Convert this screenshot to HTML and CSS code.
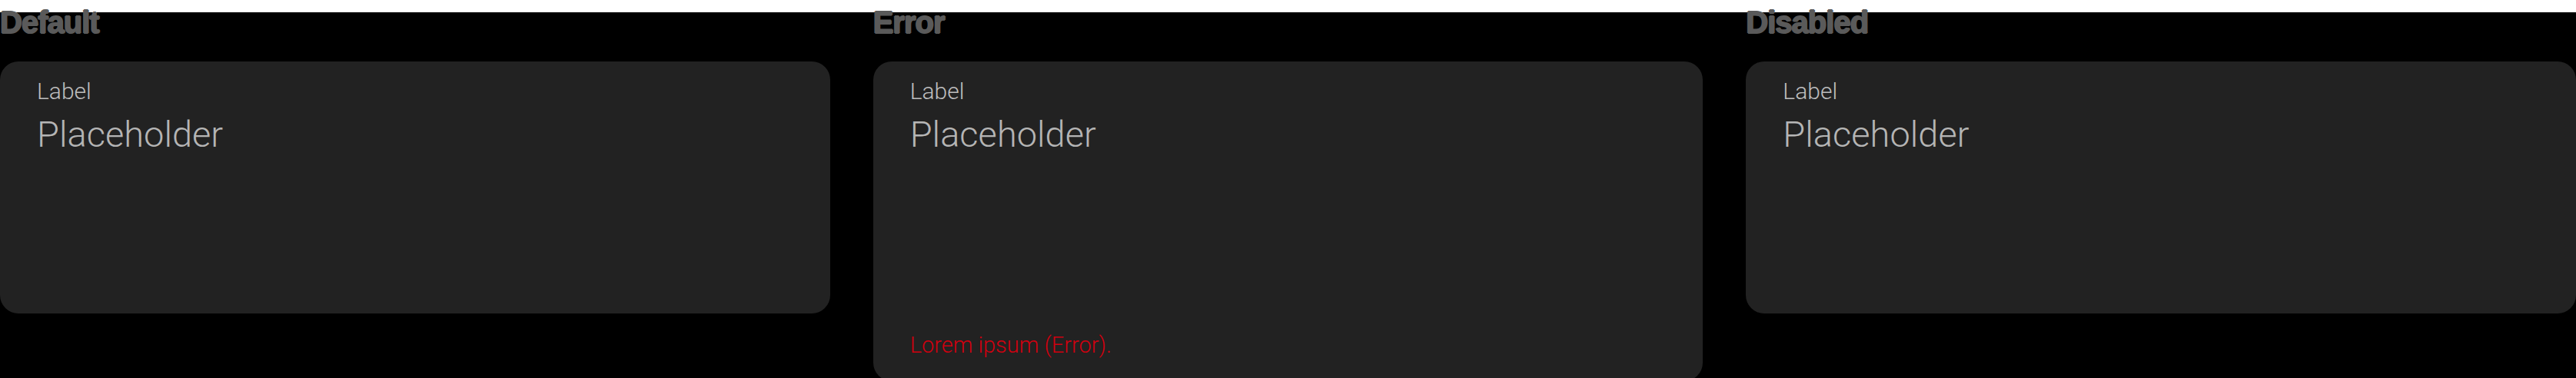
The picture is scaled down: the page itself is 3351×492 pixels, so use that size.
FILE: index.html
```html
<!DOCTYPE html>
<html lang="en">
<head>
<meta charset="utf-8">
<title>Text field states</title>
<link rel="stylesheet" href="styles.css">
</head>
<body>
<div class="page">
  <section class="state">
    <h2 class="state-title">Default</h2>
    <div class="card">
      <div class="field">
        <div class="label">Label</div>
        <div class="placeholder">Placeholder</div>
      </div>
    </div>
  </section>
  <section class="state">
    <h2 class="state-title">Error</h2>
    <div class="card">
      <div class="field">
        <div class="label">Label</div>
        <div class="placeholder">Placeholder</div>
      </div>
      <div class="error">Lorem ipsum (Error).</div>
    </div>
  </section>
  <section class="state">
    <h2 class="state-title">Disabled</h2>
    <div class="card">
      <div class="field">
        <div class="label">Label</div>
        <div class="placeholder">Placeholder</div>
      </div>
    </div>
  </section>
</div>
</body>
</html>
```

FILE: styles.css
```css
html, body {
  margin: 0;
  padding: 0;
  overflow: hidden;
  background: #ffffff;
}

.page {
  margin-top: 16px;
  height: 476px;
  background: #000000;
  display: flex;
  gap: 56px;
  font-family: Roboto, "Liberation Sans", sans-serif;
}

.state {
  flex: 0 1 1080px;
  min-width: 0;
  display: flex;
  flex-direction: column;
}

.state-title {
  margin: -8px 0 0 0;
  height: 40px;
  font-family: "Liberation Sans", Arial, sans-serif;
  font-weight: 700;
  font-size: 40px;
  line-height: 42px;
  letter-spacing: -1px;
  color: #5a5a5a;
  white-space: nowrap;
  text-shadow: 1px 0 0 #5a5a5a, -1px 0 0 #5a5a5a, 0 1px 0 #5a5a5a, 0 -1px 0 #5a5a5a;
}

.card {
  margin-top: 32px;
  background: #222222;
  border-radius: 24px;
  padding: 21px 48px 0 48px;
  display: flex;
  flex-direction: column;
}

.field {
  height: 307px;
  display: flex;
  flex-direction: column;
}

.label {
  font-weight: 300;
  font-size: 30px;
  line-height: 36px;
  color: #bdbdbd;
}

.placeholder {
  margin-top: 11px;
  font-weight: 300;
  font-size: 47px;
  line-height: 54px;
  color: #b5b5b5;
}

.error {
  margin-top: 24px;
  padding-bottom: 30px;
  font-weight: 300;
  font-size: 29px;
  line-height: 34px;
  color: #d0000f;
}
```
